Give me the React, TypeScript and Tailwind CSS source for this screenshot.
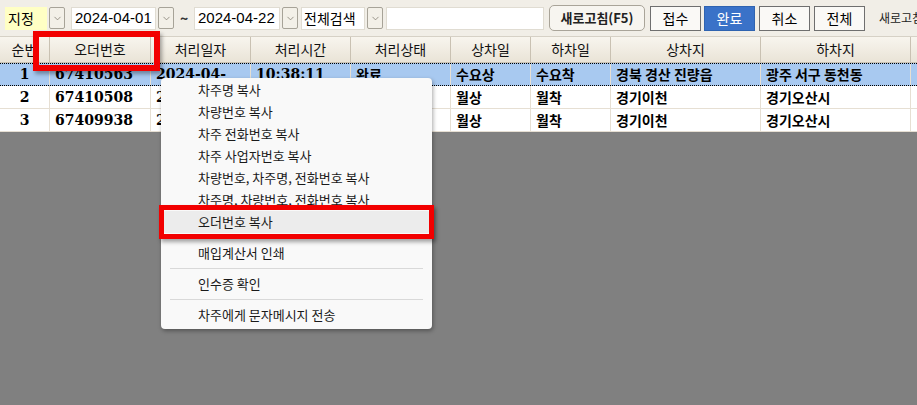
import { ChevronDown } from "lucide-react";

const kr = "font-['Noto_Sans_CJK_KR',sans-serif]";

const cols = [
  { label: "순번", w: "w-[50px]" },
  { label: "오더번호", w: "w-[101px]" },
  { label: "처리일자", w: "w-[100px]" },
  { label: "처리시간", w: "w-[100px]" },
  { label: "처리상태", w: "w-[100px]" },
  { label: "상차일", w: "w-[80px]" },
  { label: "하차일", w: "w-[80px]" },
  { label: "상차지", w: "w-[150px]" },
  { label: "하차지", w: "w-[150px]" },
];

const rows = [
  ["1", "67410563", "2024-04-", "10:38:11", "완료", "수요상", "수요착", "경북 경산 진량읍", "광주 서구 동천동"],
  ["2", "67410508", "2024-04-", "10:11:02", "완료", "월상", "월착", "경기이천", "경기오산시"],
  ["3", "67409938", "2024-04-", "09:48:30", "완료", "월상", "월착", "경기이천", "경기오산시"],
];

const menu: (string | null)[] = [
  "차주명 복사",
  "차량번호 복사",
  "차주 전화번호 복사",
  "차주 사업자번호 복사",
  "차량번호, 차주명, 전화번호 복사",
  "차주명, 차량번호, 전화번호 복사",
  "오더번호 복사",
  null,
  "매입계산서 인쇄",
  null,
  "인수증 확인",
  null,
  "차주에게 문자메시지 전송",
];

function DropBtn() {
  return (
    <div className="ml-[2px] flex h-[22px] w-[16px] shrink-0 items-center justify-center rounded-[2px] border border-[#a7a398] bg-[#f3f0e8]">
      <ChevronDown size={11} strokeWidth={1.6} className="text-[#7a7468]" />
    </div>
  );
}

function Btn({ text, active, ml }: { text: string; active?: boolean; ml: string }) {
  return (
    <div
      className={`${ml} flex h-[25px] w-[51px] shrink-0 items-center justify-center border text-[14px] ${
        active ? "border-[#2f63b0] bg-[#3a72c8] text-white" : "border-[#6f6f6f] bg-[#faf9f6] text-black"
      }`}
    >
      {text}
    </div>
  );
}

export default function App() {
  return (
    <div className={`relative flex h-[405px] w-[917px] flex-col overflow-hidden bg-[#808080] ${kr}`}>
      {/* toolbar */}
      <div className="flex h-[37px] items-center overflow-hidden whitespace-nowrap border-b border-[#d6d1c6] bg-[#f1eee7] pl-[5px]">
        <div className="flex h-[23px] w-[42px] shrink-0 items-center bg-[#ffffc4] px-[3px] text-[14px]">지정</div>
        <DropBtn />
        <div className="ml-[6px] flex h-[23px] w-[85px] shrink-0 items-center border border-[#e0dcd2] bg-white px-[3px] font-['Liberation_Sans',sans-serif] text-[15px]">
          2024-04-01
        </div>
        <DropBtn />
        <span className="ml-[6px] w-[8px] shrink-0 text-center text-[14px] font-bold text-[#333]">~</span>
        <div className="ml-[6px] flex h-[23px] w-[86px] shrink-0 items-center border border-[#e0dcd2] bg-white px-[3px] font-['Liberation_Sans',sans-serif] text-[15px]">
          2024-04-22
        </div>
        <DropBtn />
        <div className="ml-[3px] flex h-[23px] w-[64px] shrink-0 items-center border border-[#e0dcd2] bg-white px-[2px] text-[14px]">
          전체검색
        </div>
        <DropBtn />
        <div className="ml-[3px] h-[23px] w-[158px] shrink-0 border border-[#e0dcd2] bg-white" />
        <div className="ml-[5px] flex h-[26px] w-[96px] shrink-0 items-center justify-center rounded-[5px] border border-[#a9a499] bg-[#f7f5f0] text-[13px] font-bold text-[#222]">
          새로고침(F5)
        </div>
        <Btn text="접수" ml="ml-[5px]" />
        <Btn text="완료" active ml="ml-[3px]" />
        <Btn text="취소" ml="ml-[4px]" />
        <Btn text="전체" ml="ml-[4px]" />
        <span className="ml-[14px] shrink-0 text-[12px] text-[#222]">새로고침</span>
      </div>

      {/* grid */}
      <div className="flex flex-col bg-white">
        <div className="flex h-[26px] bg-gradient-to-b from-[#f8f5ee] to-[#e9e3d6]">
          {cols.map((c) => (
            <div
              key={c.label}
              className={`${c.w} flex shrink-0 items-center justify-center border-r border-b border-[#c9c1b2] text-[14px] text-[#111]`}
            >
              {c.label}
            </div>
          ))}
          <div className="flex-1 border-b border-[#c9c1b2]" />
        </div>
        {rows.map((r, i) => (
          <div
            key={i}
            className={`flex h-[23px] ${
              i === 0 ? "border-y border-dotted border-black bg-[#a8c9f0]" : "border-b border-[#e6dfd3] bg-white"
            }`}
          >
            {r.map((v, j) => (
              <div
                key={j}
                className={`${cols[j].w} flex shrink-0 items-center overflow-hidden whitespace-nowrap border-r border-[#e6dfd3] font-bold text-black ${
                  j === 0 ? "justify-center" : "pl-[5px]"
                } ${j < 4 ? "font-['DejaVu_Serif',serif] text-[14px]" : "text-[14px]"}`}
              >
                {v}
              </div>
            ))}
            <div className="flex-1" />
          </div>
        ))}
      </div>
      <div className="flex-1" />

      {/* context menu */}
      <div className="absolute left-[161px] top-[78px] w-[271px] rounded-[4px] bg-[#f9f9f9] pt-[1px] pb-[3px] shadow-[1px_2px_4px_rgba(0,0,0,0.35)]">
        {menu.map((m, i) =>
          m === null ? (
            <div key={i} className="flex h-[9px] items-center px-[9px]">
              <div className="h-px w-full bg-[#d9d9d9]" />
            </div>
          ) : (
            <div
              key={i}
              className={`mx-[2px] flex h-[22px] items-center whitespace-nowrap rounded-[3px] pl-[35px] text-[13px] text-[#1a1a1a] ${
                m === "오더번호 복사" ? "bg-[#ececec]" : ""
              }`}
            >
              {m}
            </div>
          )
        )}
      </div>

      {/* annotations */}
      <div className="absolute left-[33px] top-[31px] h-[40px] w-[127px] border-[6px] border-[#f20000] shadow-[2px_3px_4px_rgba(0,0,0,0.35)]" />
      <div className="absolute left-[159px] top-[205px] h-[34px] w-[275px] border-[5px] border-[#f20000] shadow-[2px_3px_4px_rgba(0,0,0,0.35)]" />
    </div>
  );
}
